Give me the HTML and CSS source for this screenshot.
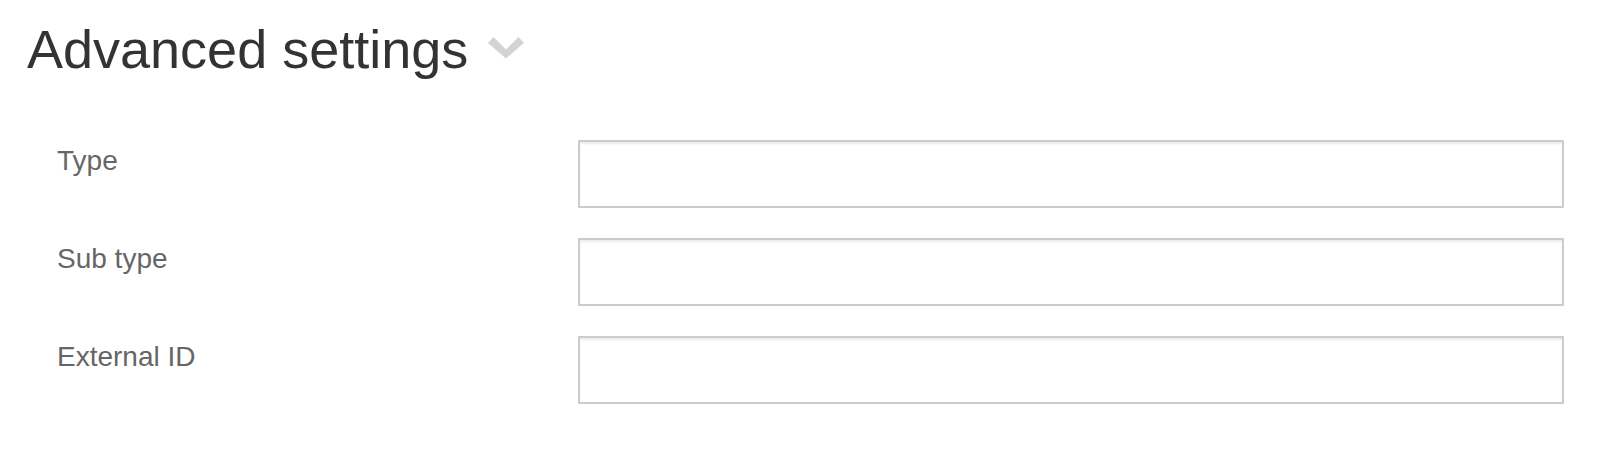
FILE: index.html
```html
<!DOCTYPE html>
<html lang="en">
<head>
<meta charset="utf-8">
<title>Advanced settings</title>
<link rel="stylesheet" href="styles.css">
</head>
<body>
<div class="page">
  <h1 class="section-title">
    <span class="section-title__text">Advanced settings</span>
    <svg class="section-title__chevron" width="36" height="22" viewBox="0 0 36 22" aria-hidden="true">
      <polygon points="0,6 5.5,0 18,12.5 30.5,0 36,6 18,21.5" fill="#d3d3d3"/>
    </svg>
  </h1>
  <form class="settings-form">
    <label class="field-label" for="f-type">Type</label>
    <input class="field-input" id="f-type" type="text">
    <label class="field-label" for="f-subtype">Sub type</label>
    <input class="field-input" id="f-subtype" type="text">
    <label class="field-label" for="f-extid">External ID</label>
    <input class="field-input" id="f-extid" type="text">
  </form>
</div>
</body>
</html>
```

FILE: styles.css
```css
html, body {
  margin: 0;
  padding: 0;
  background: #ffffff;
}

body {
  font-family: "Liberation Sans", Helvetica, Arial, sans-serif;
  color: #333333;
}

.page {
  padding: 19px 42px 0 27px;
}

.section-title {
  display: flex;
  align-items: flex-start;
  gap: 20px;
  margin: 0;
  font-size: 54px;
  line-height: 60px;
  font-weight: normal;
  color: #333333;
}

.section-title__chevron {
  margin-top: 18px;
  flex: none;
}

.settings-form {
  display: grid;
  grid-template-columns: 551px 1fr;
  grid-auto-rows: 68px;
  row-gap: 30px;
  margin: 61px 0 0 0;
}

.field-label {
  padding: 3px 0 0 30px;
  font-size: 28px;
  line-height: 36px;
  color: #666666;
}

.field-input {
  box-sizing: border-box;
  width: 100%;
  height: 68px;
  margin: 0;
  border: 2px solid #cccccc;
  border-radius: 1px;
  background: #ffffff;
  box-shadow: inset 0 2px 2px rgba(0, 0, 0, 0.075);
  font: inherit;
  outline: none;
}
```
